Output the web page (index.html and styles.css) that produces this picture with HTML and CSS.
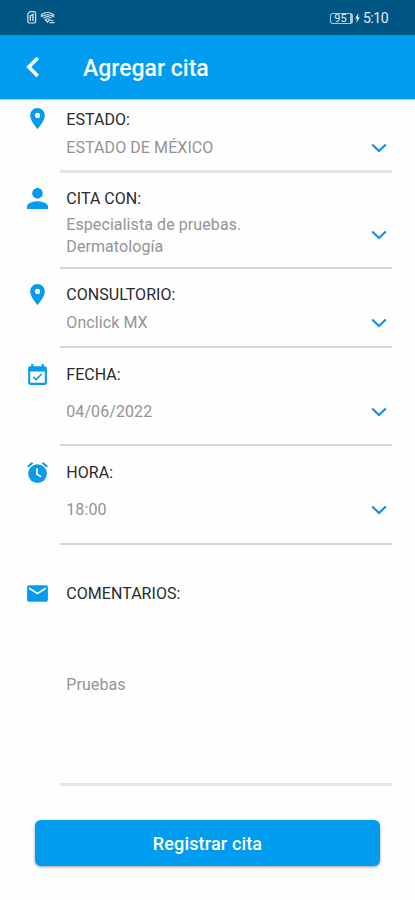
FILE: index.html
```html
<!DOCTYPE html>
<html lang="es">
<head>
<meta charset="utf-8">
<meta name="viewport" content="width=device-width">
<title>Agregar cita</title>
<link rel="stylesheet" href="styles.css">
</head>
<body>
<div class="status">
  <svg class="signals" width="30" height="15" viewBox="0 0 30 15" fill="none" stroke="#d3e3ed" stroke-width="1.200">
    <path d="M1.800 3.800 4 1.600h3.800q1.800 0 1.800 1.800v8q0 1.600-1.800 1.600H3.200q-1.400 0-1.400-1.400z"/>
    <path d="M4.300 11V6l2.700-1.500V11" stroke-width="1.400"/>
    <path d="M15.500 4.800q6-4.600 12 0v1.700q-6-3.500-12 0zM17.500 8q4-2.800 8 0M19.300 9.500q2.200-1.500 4.400 0l-2.200 2.500zM23.500 12.600h5M24.500 10.500h3"/>
  </svg>
  <div class="power">
    <span class="battery">95</span>
    <svg width="5" height="10" viewBox="0 0 5 10" fill="#e4eff6"><path d="M3.400 0 .2 5.500h1.700L1.400 10l3.300-5.800H3z"/></svg>
    <span class="clock">5:10</span>
  </div>
</div>
<header class="bar">
  <svg class="back" width="15" height="22" viewBox="0 0 15 22" fill="none" stroke="#fff" stroke-width="3.600"><path d="M12.700 2 3.800 11l8.900 9"/></svg>
  <h1>Agregar cita</h1>
</header>
<main>
  <section class="row state">
    <svg class="icon" viewBox="0 0 24 24"><path d="M12 2C8.130 2 5 5.130 5 9c0 5.250 7 13 7 13s7-7.750 7-13c0-3.870-3.130-7-7-7zm0 9.500a2.500 2.500 0 1 1 0-5 2.500 2.500 0 0 1 0 5z"/></svg>
    <div class="field"><h2>ESTADO:</h2><p>ESTADO DE MÉXICO</p><svg class="chevron" viewBox="0 0 16 10"><path d="m1.200 1.500 6.800 6.500 6.800-6.500"/></svg></div>
  </section>
  <section class="row person">
    <svg class="icon" viewBox="2.500 2.500 19 19"><path d="M12 12c2.210 0 4-1.790 4-4s-1.790-4-4-4-4 1.790-4 4 1.790 4 4 4zm0 2c-2.670 0-8 1.340-8 4v2h16v-2c0-2.660-5.330-4-8-4z"/></svg>
    <div class="field"><h2>CITA CON:</h2><p>Especialista de pruebas.<br>Dermatología</p><svg class="chevron" viewBox="0 0 16 10"><path d="m1.200 1.500 6.800 6.500 6.800-6.500"/></svg></div>
  </section>
  <section class="row office">
    <svg class="icon" viewBox="0 0 24 24"><path d="M12 2C8.130 2 5 5.130 5 9c0 5.250 7 13 7 13s7-7.750 7-13c0-3.870-3.130-7-7-7zm0 9.500a2.500 2.500 0 1 1 0-5 2.500 2.500 0 0 1 0 5z"/></svg>
    <div class="field"><h2>CONSULTORIO:</h2><p>Onclick MX</p><svg class="chevron" viewBox="0 0 16 10"><path d="m1.200 1.500 6.800 6.500 6.800-6.500"/></svg></div>
  </section>
  <section class="row date">
    <svg class="icon" viewBox="0 -1 24 24"><path d="M16.530 11.060 15.470 10l-4.880 4.880-2.120-2.120-1.060 1.060L10.590 17l5.940-5.940zM19 3h-1V1h-2v2H8V1H6v2H5c-1.110 0-1.990.9-1.990 2L3 19a2 2 0 0 0 2 2h14c1.100 0 2-.9 2-2V5c0-1.100-.9-2-2-2zm0 16H5V8h14v11z"/></svg>
    <div class="field"><h2>FECHA:</h2><p>04/06/2022</p><svg class="chevron" viewBox="0 0 16 10"><path d="m1.200 1.500 6.800 6.500 6.800-6.500"/></svg></div>
  </section>
  <section class="row time">
    <svg class="icon" viewBox="0 0 24 24"><circle cx="12" cy="13" r="9"/><path d="m22 5.720-4.600-3.860-1.290 1.530 4.600 3.860zM7.880 3.390 6.600 1.860 2 5.710l1.290 1.530z"/><path class="hands" d="M11.500 8v5.700l4 2.400"/></svg>
    <div class="field"><h2>HORA:</h2><p>18:00</p><svg class="chevron" viewBox="0 0 16 10"><path d="m1.200 1.500 6.800 6.500 6.800-6.500"/></svg></div>
  </section>
  <section class="row comments">
    <svg class="icon" viewBox="0 0 24 24"><path d="M20 4H4c-1.100 0-1.990.9-1.990 2L2 18c0 1.100.9 2 2 2h16c1.100 0 2-.9 2-2V6c0-1.100-.9-2-2-2zm0 4-8 5-8-5V6l8 5 8-5z"/></svg>
    <div class="field"><h2>COMENTARIOS:</h2><p>Pruebas</p></div>
  </section>
  <button class="submit" type="button">Registrar cita</button>
</main>
</body>
</html>
```
FILE: styles.css
```css
* { box-sizing: border-box; margin: 0; padding: 0; }
body { width: 415px; height: 900px; overflow: hidden; background: #fefefe; font-family: Roboto, sans-serif; }
svg { display: block; flex: none; }
.status { height: 35px; background: #005682; display: flex; justify-content: space-between; padding: 10px 27px 0 26px; }
.power { display: flex; align-items: center; height: 16px; color: #e0ebf3; }
.battery { width: 23px; height: 11px; border: 1px solid #a9c8da; border-right-width: 3px; border-radius: 3px; font-size: 11px; line-height: 9px; text-align: center; margin-right: 2px; }
.clock { font-size: 14px; margin-left: 3px; letter-spacing: -.5px; }
.bar { height: 65px; background: #009cf0; border-bottom: 1px solid #a3d5f6; display: flex; align-items: center; padding-left: 25px; color: #fff; }
.back { margin-right: 43px; }
h1 { font-size: 23px; font-weight: 500; line-height: 30px; margin-top: 3px; }
.row { display: grid; grid-template-columns: 25px 332px; column-gap: 10px; margin-left: 25px; }
.icon { width: 25px; height: 25px; fill: #079aed; margin-top: 7px; }
.hands { fill: none; stroke: #fff; stroke-width: 1.600; }
.field { display: grid; grid-template-columns: 1fr 16px; align-content: start; padding: 10px 5.500px 0 6.300px; border-bottom: 2px solid #d6d6d6; }
h2 { grid-column: 1 / 3; font-size: 16px; font-weight: 400; line-height: 20px; letter-spacing: .04px; color: #2a2a2a; }
p { font-size: 16px; line-height: 22px; letter-spacing: .08px; color: #949494; align-self: center; }
.chevron { width: 16px; height: 10px; fill: none; stroke: #168fe3; stroke-width: 2.200; align-self: center; }
.state { height: 73px; }
.state .icon { margin-top: 6px; }
.state .field { border-bottom: 3px solid #e5e5e5; row-gap: 7px; }
.person { height: 96px; }
.person .field { padding-top: 16px; row-gap: 5px; }
.person .icon { margin-top: 13px; }
.person .chevron { margin-bottom: 3px; }
.office { height: 79px; }
.office .field { padding-top: 16px; row-gap: 7px; }
.office .icon { margin-top: 13px; }
.date { height: 98px; }
.date .field { padding-top: 17px; row-gap: 16px; }
.date .icon { margin-top: 14px; }
.time { height: 99px; }
.time .field { padding-top: 17px; row-gap: 16px; }
.time .icon { margin-top: 14px; }
.comments { height: 241px; }
.comments .field { border-bottom: 3px solid #e5e5e5; padding-top: 39px; row-gap: 70px; }
.comments .icon { margin-top: 36px; }
.submit { display: block; width: 345px; height: 46px; margin: 34px 0 0 35px; border: 0; border-radius: 6px; background: #009cf0; box-shadow: 0 1px 3px rgba(0,0,0,.4); color: #fff; font: 500 18px/46px Roboto, sans-serif; letter-spacing: .15px; padding-top: 1px; }
```
